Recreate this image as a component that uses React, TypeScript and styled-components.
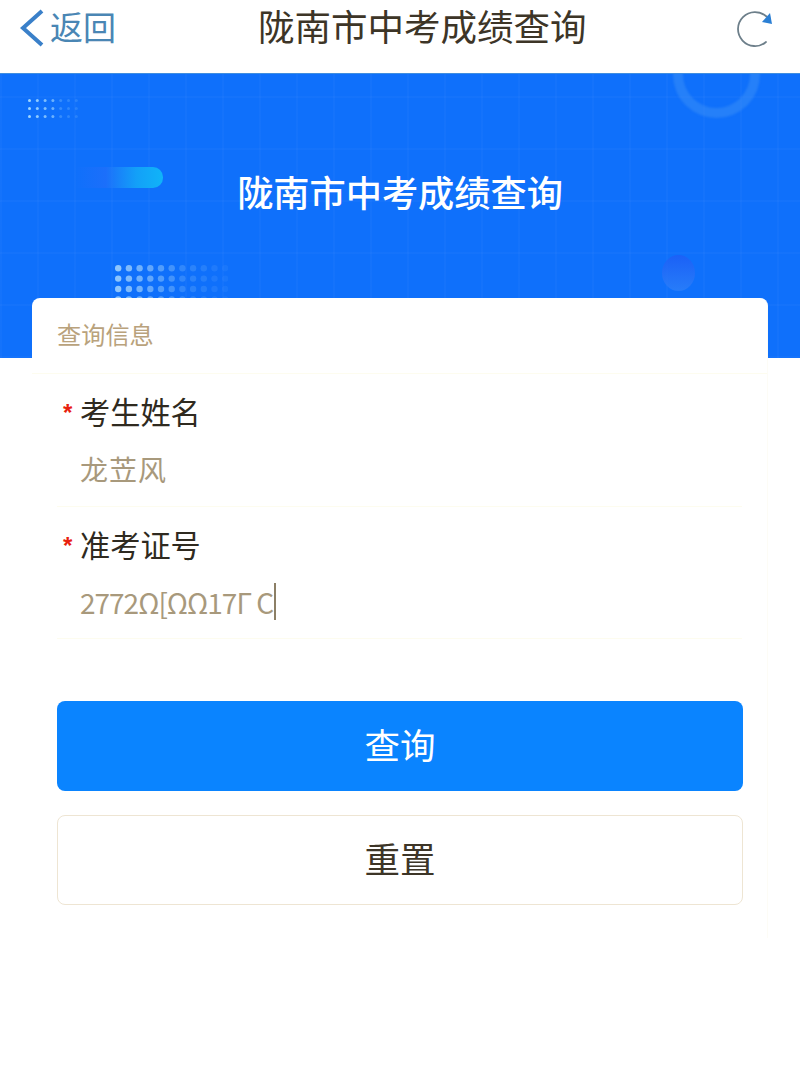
import styled, { createGlobalStyle } from 'styled-components';

const GlobalStyle = createGlobalStyle`
  html, body {
    margin: 0;
    padding: 0;
    background: #ffffff;
    font-family: "Noto Sans CJK SC", "Liberation Sans", sans-serif;
  }
`;

const Page = styled.div`
  width: 800px;
  height: 1071px;
  overflow: hidden;
  background: #ffffff;
`;

const NavBar = styled.div`
  display: flex;
  align-items: center;
  height: 73px;
  padding: 0 26px 21px 20px;
  box-sizing: border-box;
`;

const BackLink = styled.div`
  display: flex;
  align-items: center;
  gap: 6px;
  width: 238px;
  flex: none;
  color: #4a86b4;
  font-size: 33px;
  line-height: 40px;
`;

const BackIcon = styled.svg`
  margin-top: 3px;
`;

const NavTitle = styled.div`
  font-size: 36.5px;
  line-height: 44px;
  color: #3d3527;
  white-space: nowrap;
`;

const RefreshButton = styled.div`
  margin-left: auto;
  display: flex;
  margin-top: 5px;
`;

const Hero = styled.div`
  position: relative;
  height: 285px;
  overflow: hidden;
  border-top: 1px solid #3f8ee0;
  box-sizing: border-box;
  background-color: #0f70fb;
  background-image:
    repeating-linear-gradient(90deg, rgba(255, 255, 255, 0.025) 0 2px, transparent 2px 37px),
    repeating-linear-gradient(0deg, rgba(255, 255, 255, 0.022) 0 2px, transparent 2px 52px);
  display: flex;
  justify-content: center;
  padding-top: 92px;
`;

const HeroTitle = styled.div`
  font-size: 36.2px;
  line-height: 50px;
  height: 50px;
  color: #ffffff;
  font-weight: 500;
  white-space: nowrap;
`;

const Ring = styled.div`
  position: absolute;
  left: 673px;
  top: -16px;
  width: 87px;
  height: 60px;
  box-sizing: border-box;
  border: 10px solid rgba(70, 150, 245, 0.42);
  border-top: none;
  border-radius: 0 0 44px 44px;
  filter: blur(1px);
`;

const Streak = styled.div`
  position: absolute;
  left: 75px;
  top: 93px;
  width: 88px;
  height: 21px;
  border-radius: 0 10px 10px 0;
  background: linear-gradient(90deg, rgba(70, 70, 240, 0) 0%, rgba(40, 110, 250, 0.5) 35%, #13a0f8 70%, #10b4f8 100%);
`;

const Blob = styled.div`
  position: absolute;
  left: 662px;
  top: 181px;
  width: 33px;
  height: 36px;
  border-radius: 50%;
  background: linear-gradient(180deg, #1f5cf5 0%, #2f80f8 100%);
  opacity: 0.75;
`;

const DotsLayer = styled.svg<{ $left: number; $top: number }>`
  position: absolute;
  left: ${p => p.$left}px;
  top: ${p => p.$top}px;
`;

const Card = styled.div`
  position: relative;
  margin: -60px 32px 0;
  height: 640px;
  box-sizing: border-box;
  background: #ffffff;
  border-radius: 8px 8px 0 0;
  border-right: 1px solid #fdfcf6;
`;

const CardHeading = styled.div`
  height: 76px;
  padding: 18px 0 0 25px;
  box-sizing: border-box;
  font-size: 24.2px;
  line-height: 36px;
  color: #b9a27c;
  border-bottom: 1px solid #fdfcef;
`;

const Form = styled.div`
  padding: 0 25px;
`;

const Field = styled.div`
  height: 132.5px;
  box-sizing: border-box;
  padding: 15px 5px 0 6px;
  border-bottom: 1px solid #fdfcef;
`;

const FieldLabel = styled.div`
  display: flex;
  align-items: center;
  gap: 7px;
  height: 44px;
  font-size: 30.2px;
  color: #2f2a20;
`;

const Star = styled.span`
  color: #e8200f;
  font-size: 24px;
  line-height: 24px;
  width: 10px;
  font-family: "Liberation Sans", sans-serif;
  font-weight: 700;
  padding-top: 4px;
`;

const FieldValue = styled.div<{ $spacing: number }>`
  display: flex;
  align-items: center;
  height: 44px;
  margin: 14px 0 0 17px;
  font-size: 28px;
  color: #a8997c;
  white-space: nowrap;
  letter-spacing: ${p => p.$spacing}px;
`;

const Caret = styled.span`
  display: inline-block;
  width: 2px;
  height: 37px;
  margin-left: 1px;
  background: #8c7f66;
`;

const Actions = styled.div`
  display: flex;
  flex-direction: column;
  gap: 24px;
  padding: 62px 24px 0 25px;
`;

const ActionButton = styled.button<{ $primary?: boolean }>`
  display: flex;
  align-items: center;
  justify-content: center;
  height: 90px;
  padding: 0 0 6px;
  box-sizing: border-box;
  border-radius: 8px;
  font-family: inherit;
  font-size: 35.5px;
  background: ${p => (p.$primary ? '#0a84ff' : '#ffffff')};
  color: ${p => (p.$primary ? '#ffffff' : '#3d3527')};
  border: ${p => (p.$primary ? 'none' : '1px solid #eee5d3')};
`;

const Dots = ({
  left,
  top,
  cols,
  rows,
  gapX,
  gapY,
  r,
  fill,
}: {
  left: number;
  top: number;
  cols: number;
  rows: number;
  gapX: number;
  gapY: number;
  r: number;
  fill: string;
}) => {
  const dots = [];
  for (let y = 0; y < rows; y++) {
    for (let x = 0; x < cols; x++) {
      // fades out to the right
      const opacity = x < cols / 2 ? 0.85 - x * 0.1 : Math.max(0.06, 0.25 - (x - cols / 2) * 0.04);
      dots.push(
        <circle
          key={`${x}-${y}`}
          cx={r + x * gapX}
          cy={r + y * gapY}
          r={r}
          fill={fill}
          opacity={opacity}
        />
      );
    }
  }
  return (
    <DotsLayer
      $left={left}
      $top={top}
      width={r * 2 + (cols - 1) * gapX}
      height={r * 2 + (rows - 1) * gapY}
    >
      {dots}
    </DotsLayer>
  );
};

export default function App() {
  return (
    <Page>
      <GlobalStyle />
      <NavBar>
        <BackLink>
          <BackIcon width="24" height="38" viewBox="0 0 24 38">
            <path d="M22 2 L3 19 L22 36" fill="none" stroke="#3a80c9" strokeWidth="4" />
          </BackIcon>
          返回
        </BackLink>
        <NavTitle>陇南市中考成绩查询</NavTitle>
        <RefreshButton>
          <svg width="37" height="38" viewBox="0 0 37 38">
            <path
              d="M29.5 6.5 A17 17 0 1 0 29 32"
              fill="none"
              stroke="#6d7f8a"
              strokeWidth="1.8"
              strokeLinecap="round"
            />
            <path d="M25 12 L35 14 L33 3 Z" fill="#2b7fd4" />
          </svg>
        </RefreshButton>
      </NavBar>
      <Hero>
        <Ring />
        <Streak />
        <Blob />
        <Dots left={28} top={25} cols={7} rows={3} gapX={7.8} gapY={8} r={1.5} fill="#b8e8ff" />
        <Dots left={115} top={191} cols={11} rows={4} gapX={10.7} gapY={10.4} r={3.2} fill="#a5d4fb" />
        <HeroTitle>陇南市中考成绩查询</HeroTitle>
      </Hero>
      <Card>
        <CardHeading>查询信息</CardHeading>
        <Form>
          <Field>
            <FieldLabel>
              <Star>*</Star>
              考生姓名
            </FieldLabel>
            <FieldValue $spacing={1}>龙苙风</FieldValue>
          </Field>
          <Field>
            <FieldLabel>
              <Star>*</Star>
              准考证号
            </FieldLabel>
            <FieldValue $spacing={-1}>
              2772Ω[ΩΩ17Γ C
              <Caret />
            </FieldValue>
          </Field>
        </Form>
        <Actions>
          <ActionButton $primary>查询</ActionButton>
          <ActionButton>重置</ActionButton>
        </Actions>
      </Card>
    </Page>
  );
}
